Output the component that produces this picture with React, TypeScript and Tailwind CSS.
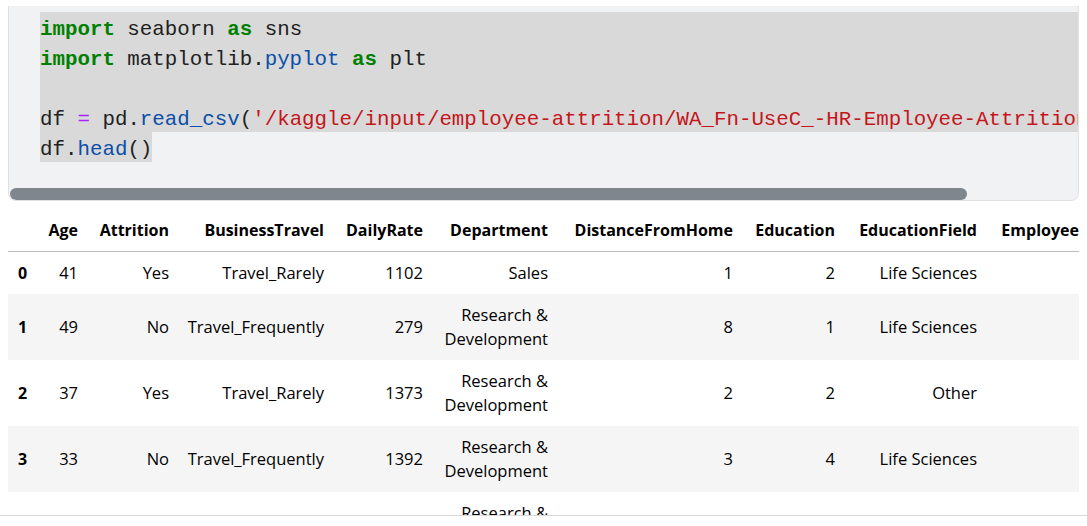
const cols = [
  { key: 'Age', w: 'w-[50px]' },
  { key: 'Attrition', w: 'w-[91px]' },
  { key: 'BusinessTravel', w: 'w-[155px]' },
  { key: 'DailyRate', w: 'w-[99px]' },
  { key: 'Department', w: 'w-[125px]' },
  { key: 'DistanceFromHome', w: 'w-[185px]' },
  { key: 'Education', w: 'w-[102px]' },
  { key: 'EducationField', w: 'w-[142px]' },
  { key: 'EmployeeCount', w: 'w-[150px]' },
]

const rows = [
  ['41', 'Yes', 'Travel_Rarely', '1102', 'Sales', '1', '2', 'Life Sciences', '1'],
  ['49', 'No', 'Travel_Frequently', '279', 'Research & Development', '8', '1', 'Life Sciences', '1'],
  ['37', 'Yes', 'Travel_Rarely', '1373', 'Research & Development', '2', '2', 'Other', '1'],
  ['33', 'No', 'Travel_Frequently', '1392', 'Research & Development', '3', '4', 'Life Sciences', '1'],
  ['27', 'No', 'Travel_Rarely', '591', 'Research & Development', '2', '1', 'Medical', '1'],
]

const Kw = ({ children }: { children: string }) => (
  <span className="font-bold text-[#008000]">{children}</span>
)
const Fn = ({ children }: { children: string }) => (
  <span className="text-[#0b4fa8]">{children}</span>
)

export default function App() {
  return (
    <div className="h-[516px] w-[1087px] overflow-hidden border-b border-[#d9d9d9] bg-white">
      <div className="px-2 pt-[6px]">
        {/* code cell */}
        <div className="overflow-hidden rounded-b-lg border-x border-b border-[#e0e1e4] bg-[#f1f2f4]">
          <div
            className="pl-[31px] pt-[6px] text-[20.8px] leading-[30px] text-[#212121] whitespace-pre"
            style={{ fontFamily: '"Liberation Mono", "DejaVu Sans Mono", monospace' }}
          >
            <div className="w-[2000px] bg-[#d9d9d9]">
              <div className="relative top-[3px]">
                <Kw>import</Kw> seaborn <Kw>as</Kw> sns
              </div>
              <div className="relative top-[3px]">
                <Kw>import</Kw> matplotlib.<Fn>pyplot</Fn> <Kw>as</Kw> plt
              </div>
              <div>{' '}</div>
              <div className="relative top-[3px]">
                df <span className="text-[#aa22ff]">=</span> pd.<Fn>read_csv</Fn>(
                <span className="text-[#c4161c]">'/kaggle/input/employee-attrition/WA_Fn-UseC_-HR-Employee-Attrition.csv'</span>)
              </div>
            </div>
            <div>
              <span className="inline-block h-[30px] bg-[#d9d9d9]">
                <span className="relative top-[3px]">
                  df.<Fn>head</Fn>()
                </span>
              </span>
            </div>
          </div>
          {/* horizontal scrollbar */}
          <div className="mt-[26px] h-3 pl-[1px]">
            <div className="h-3 w-[957px] rounded-full bg-[#80868d]" />
          </div>
        </div>

        {/* dataframe output */}
        <div
          className="mt-2 overflow-hidden text-[16.5px] leading-6 text-black"
          style={{ fontFamily: '"Segoe UI", "Open Sans", "Liberation Sans", sans-serif' }}
        >
          <table className="w-[1128px] table-fixed border-collapse">
            <thead>
              <tr className="border-b border-[#bdbdbd]">
                <th className="w-[29px]" />
                {cols.map((c) => (
                  <th key={c.key} className={`${c.w} px-[9px] py-[9px] text-right text-[16px] font-bold whitespace-nowrap`}>
                    {c.key}
                  </th>
                ))}
              </tr>
            </thead>
            <tbody>
              {rows.map((r, i) => (
                <tr key={i} className={i % 2 === 1 ? 'bg-[#f5f5f5]' : ''}>
                  <th className="pl-[10px] text-left text-[16px] font-bold align-middle">{i}</th>
                  {r.map((v, j) => (
                    <td key={j} className="px-[9px] py-[9px] text-right align-middle">
                      {v}
                    </td>
                  ))}
                </tr>
              ))}
            </tbody>
          </table>
        </div>
      </div>
    </div>
  )
}
